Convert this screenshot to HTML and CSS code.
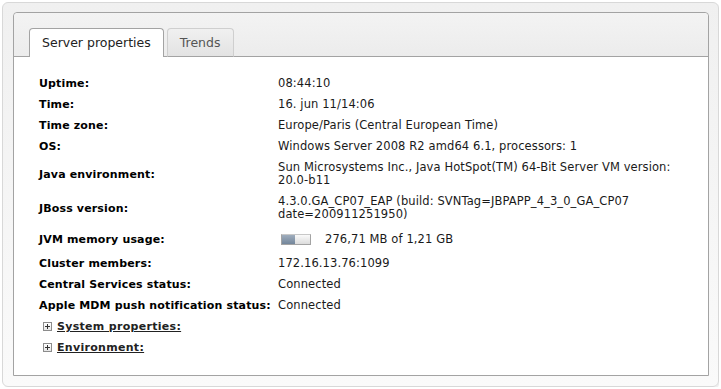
FILE: index.html
```html
<!doctype html>
<html>

<head>
  <title>Server properties</title>
  <link rel="stylesheet" href="styles.css">
</head>

<body>
  <div class="panel">
    <div class="tab-box">
      <div class="tab-strip">
        <div class="tab active">Server properties</div>
        <div class="tab">Trends</div>
      </div>
      <div class="tab-content">
        <table class="props">
          <tr>
            <th>Uptime:</th>
            <td>08:44:10</td>
          </tr>
          <tr>
            <th>Time:</th>
            <td>16. jun 11/14:06</td>
          </tr>
          <tr>
            <th>Time zone:</th>
            <td>Europe/Paris (Central European Time)</td>
          </tr>
          <tr>
            <th>OS:</th>
            <td>Windows Server 2008 R2 amd64 6.1, processors: 1</td>
          </tr>
          <tr>
            <th>Java environment:</th>
            <td>Sun Microsystems Inc., Java HotSpot(TM) 64-Bit Server VM version: <span class="nowrap">20.0-b11</span></td>
          </tr>
          <tr>
            <th>JBoss version:</th>
            <td>4.3.0.GA_CP07_EAP (build: SVNTag=JBPAPP_4_3_0_GA_CP07 date=200911251950)</td>
          </tr>
          <tr>
            <th>JVM memory usage:</th>
            <td>
              <div class="memory">
                <span class="bar"><span class="fill" style="width: 48%"></span></span>
                <span>276,71 MB of 1,21 GB</span>
              </div>
            </td>
          </tr>
          <tr>
            <th>Cluster members:</th>
            <td>172.16.13.76:1099</td>
          </tr>
          <tr>
            <th>Central Services status:</th>
            <td>Connected</td>
          </tr>
          <tr>
            <th>Apple MDM push notification status:</th>
            <td>Connected</td>
          </tr>
          <tr>
            <td colspan="2" class="expander"><span class="plus"></span><a href="#">System properties:</a></td>
          </tr>
          <tr>
            <td colspan="2" class="expander"><span class="plus"></span><a href="#">Environment:</a></td>
          </tr>
        </table>
      </div>
    </div>
  </div>
</body>

</html>
```

FILE: styles.css
```css
body {
  margin: 2px;
  font-family: "DejaVu Sans", Verdana, sans-serif;
  font-size: 11px;
  color: #1a1a1a;
  background-color: #fff;
}

.panel {
  height: 364px;
  padding: 9px 9px 10px 10px;
  border: 1px solid #d8d8d8;
  border-radius: 6px;
  background: linear-gradient(#f0f0f0, #fafafa);
  box-shadow: 1px 1px 1px rgba(0, 0, 0, 0.08);
}

.tab-box {
  height: 362px;
  border: 1px solid #a3a3a3;
  border-radius: 4px 4px 0 0;
  background-color: #fff;
  display: flex;
  flex-direction: column;
}

.tab-strip {
  display: flex;
  gap: 3px;
  padding: 15px 0 0 15px;
  border-bottom: 1px solid #a3a3a3;
  border-radius: 4px 4px 0 0;
  background: linear-gradient(#f3f3f3, #ececec);
}

.tab {
  height: 27px;
  line-height: 27px;
  padding: 0 12px;
  margin-bottom: -1px;
  border: 1px solid #cfcfcf;
  border-bottom-color: #a3a3a3;
  border-radius: 4px 4px 0 0;
  font-size: 12.5px;
  color: #555;
  background: linear-gradient(#f0f0f0, #e3e3e3);
}

.tab.active {
  height: 28px;
  border-color: #a3a3a3;
  border-bottom: none;
  color: #222;
  background: #fff;
}

.tab-content {
  flex-grow: 1;
  padding: 16px 20px 16px 21px;
}

.props {
  border-collapse: collapse;
  table-layout: fixed;
  width: 100%;
}

.props th,
.props td {
  padding: 4px;
  line-height: 13px;
  text-align: left;
  vertical-align: middle;
}

.props th {
  width: 231px;
  font-weight: bold;
  letter-spacing: 0.15px;
  color: #000;
  white-space: nowrap;
}

.props td {
  font-size: 11.5px;
  letter-spacing: 0.1px;
}

.nowrap {
  white-space: nowrap;
}

.memory {
  display: flex;
  align-items: center;
  gap: 14px;
  height: 20px;
  padding-left: 3px;
}

.bar {
  display: block;
  width: 28px;
  height: 9px;
  border: 1px solid #a3a3a3;
  border-top-color: #c8c8c8;
  background: linear-gradient(#fafafa, #dcdcdc);
}

.fill {
  display: block;
  height: 100%;
  background: linear-gradient(#9fadbd, #73869b);
}

.props td.expander {
  padding-left: 8px;
  font-size: 11px;
  letter-spacing: 0.3px;
}

.plus {
  display: inline-block;
  position: relative;
  width: 7px;
  height: 7px;
  margin-right: 5px;
  vertical-align: -1px;
  border: 1px solid #8c8c8c;
  background: linear-gradient(#fff, #e6e6e6);
}

.plus::before,
.plus::after {
  content: "";
  position: absolute;
  background-color: #333;
}

.plus::before {
  left: 1px;
  top: 3px;
  width: 5px;
  height: 1px;
}

.plus::after {
  left: 3px;
  top: 1px;
  width: 1px;
  height: 5px;
}

.expander a {
  font-weight: bold;
  color: #222;
  text-decoration: underline;
}
```
